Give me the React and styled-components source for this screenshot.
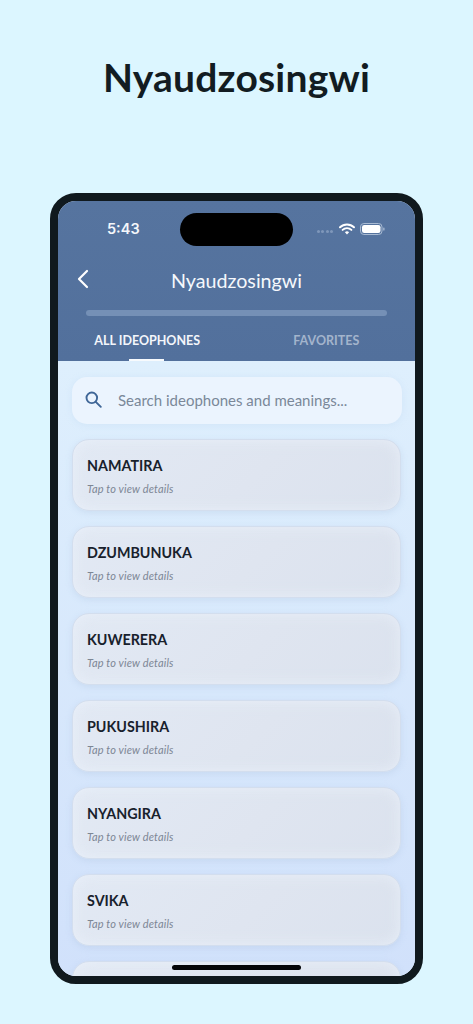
import React from 'react'
import styled, { createGlobalStyle } from 'styled-components'

const GlobalStyle = createGlobalStyle`
  html, body {
    margin: 0;
    padding: 0;
    background: #dcf6ff;
  }
  * { box-sizing: border-box; }
`

const Page = styled.div`
  width: 473px;
  height: 1024px;
  overflow: hidden;
  background: #dcf6ff;
  display: flex;
  flex-direction: column;
  align-items: center;
  padding-top: 53px;
`
const PageTitle = styled.h1`
  margin: 0 0 92px;
  height: 48px;
  line-height: 48px;
  font-family: "Lato", sans-serif;
  font-size: 39px;
  font-weight: 700;
  color: #121c22;
  letter-spacing: 0.2px;
`
const Phone = styled.div`
  width: 373px;
  height: 791px;
  flex: none;
  border: 8px solid #10191e;
  border-radius: 26px;
  background: #d6e6fb;
  overflow: hidden;
  position: relative;
  font-family: "Lato", sans-serif;
`
const Header = styled.header`
  height: 160px;
  background: linear-gradient(180deg, #56749f 0%, #52709c 100%);
  display: flex;
  flex-direction: column;
`
const StatusBar = styled.div`
  height: 44px;
  margin-top: 12px;
  padding: 0 30px 0 49px;
  display: flex;
  align-items: flex-start;
  justify-content: space-between;
`
const Time = styled.span`
  font-family: "Inter", sans-serif;
  font-size: 14.5px;
  font-weight: 600;
  line-height: 32px;
  color: #f4f7fb;
`
const Island = styled.div`
  width: 113px;
  height: 33px;
  border-radius: 17px;
  background: #000;
  margin-left: 16px;
`
const StatusIcons = styled.div`
  display: flex;
  align-items: center;
  height: 32px;
  gap: 5px;
`
const NavRow = styled.div`
  height: 44px;
  margin-top: 1px;
  padding: 0 19px;
  display: flex;
  align-items: center;
  position: relative;
  justify-content: center;
`
const BackButton = styled.button`
  position: absolute;
  left: 17px;
  top: 11px;
  padding: 0;
  border: 0;
  background: none;
  display: flex;
`
const NavTitle = styled.span`
  font-size: 19.7px;
  font-weight: 400;
  color: #f5f8fc;
`
const Progress = styled.div`
  height: 6px;
  margin: 8px 28px 0 28px;
  border-radius: 3px;
  background: #7590b6;
`
const Tabs = styled.nav`
  flex: 1;
  display: flex;
`
const Tab = styled.div`
  width: 50%;
  position: relative;
  display: flex;
  justify-content: center;
  padding-top: 16px;
  padding-left: ${(props) => (props.$active ? '0' : '1px')};
  font-size: 12.5px;
  font-weight: 700;
  line-height: 18px;
  color: ${(props) => (props.$active ? '#f3f6fb' : '#a3b4cc')};

  &::after {
    content: '';
    display: ${(props) => (props.$active ? 'block' : 'none')};
    position: absolute;
    left: 71px;
    bottom: 0;
    width: 35px;
    height: 2px;
    background: #f7fafd;
  }
`
const Content = styled.main`
  height: 615px;
  overflow: hidden;
  padding: 16px 14px 0 14px;
  background: linear-gradient(180deg, #deeffd 0%, #d1e1fb 100%);
  display: flex;
  flex-direction: column;
  gap: 15px;
`
const SearchBox = styled.div`
  width: 330px;
  height: 47px;
  flex: none;
  border-radius: 15px;
  background: #ebf4fe;
  display: flex;
  align-items: center;
  padding: 0 0 2px 13px;
  gap: 16px;
  box-shadow: 0 1px 6px rgba(190, 215, 240, 0.35);
`
const SearchText = styled.span`
  font-size: 15px;
  letter-spacing: 0;
  color: #7a8899;
`
const CardList = styled.div`
  display: flex;
  flex-direction: column;
  gap: 15px;
`
const Card = styled.article`
  width: 329px;
  height: 72px;
  flex: none;
  border-radius: 17px;
  border: 1px solid #d3deee;
  background: linear-gradient(135deg, #e2e9f4 0%, #dfe5f0 55%, #dbe2ee 100%);
  box-shadow: 0 2px 6px rgba(165, 185, 215, 0.28), inset 0 0 14px rgba(236, 243, 252, 0.7);
  padding: 16px 14px 0 14px;
`
const CardTitle = styled.h3`
  margin: 0;
  font-size: 14.3px;
  font-weight: 700;
  line-height: 20px;
  color: #18212c;
`
const CardHint = styled.p`
  margin: 6px 0 0;
  font-size: 11px;
  font-style: italic;
  line-height: 14px;
  letter-spacing: 0.15px;
  color: #7d8695;
`
const HomeBar = styled.div`
  position: absolute;
  left: 114px;
  bottom: 6px;
  width: 129px;
  height: 5px;
  border-radius: 3px;
  background: #050608;
`
const Signal = styled.div`
  display: flex;
  gap: 1.5px;
  margin-right: 1px;
  margin-top: 4px;
`
const SignalDot = styled.i`
  width: 3px;
  height: 3px;
  border-radius: 50%;
  background: #7f97ba;
`

const words = ['NAMATIRA', 'DZUMBUNUKA', 'KUWERERA', 'PUKUSHIRA', 'NYANGIRA', 'SVIKA']

function WifiIcon() {
  return (
    <svg width="16" height="12" viewBox="0 0 16 12" fill="none">
      <path d="M1 4.3a10 10 0 0 1 14 0" stroke="#fff" strokeWidth="1.9" strokeLinecap="round" />
      <path d="M3.6 6.9a6.3 6.3 0 0 1 8.8 0" stroke="#fff" strokeWidth="1.9" strokeLinecap="round" />
      <path d="M8 11.4 5.9 9.2a3 3 0 0 1 4.2 0z" fill="#fff" />
    </svg>
  )
}

function BatteryIcon() {
  return (
    <svg width="25" height="12" viewBox="0 0 25 12" fill="none">
      <rect x="0.5" y="0.5" width="21.5" height="11" rx="3.4" stroke="#a9bbd3" />
      <rect x="2" y="2" width="18.5" height="8" rx="2.2" fill="#fff" />
      <rect x="23.2" y="4.5" width="1.3" height="3" rx="0.6" fill="#a9bbd3" />
    </svg>
  )
}

function ChevronIcon() {
  return (
    <svg width="16" height="20" viewBox="0 0 16 20" fill="none">
      <path d="M12 2 4 10l8 8" stroke="#fff" strokeWidth="2.2" strokeLinecap="round" strokeLinejoin="round" />
    </svg>
  )
}

function SearchIcon() {
  return (
    <svg width="17" height="17" viewBox="0 0 17 17" fill="none">
      <circle cx="6.8" cy="6.8" r="5.3" stroke="#3f6697" strokeWidth="1.9" />
      <path d="m10.8 10.8 5 5" stroke="#3f6697" strokeWidth="1.9" strokeLinecap="round" />
    </svg>
  )
}

export default function App() {
  return (
    <Page>
      <GlobalStyle />
      <PageTitle>Nyaudzosingwi</PageTitle>
      <Phone>
        <Header>
          <StatusBar>
            <Time>5:43</Time>
            <Island />
            <StatusIcons>
              <Signal>
                <SignalDot />
                <SignalDot />
                <SignalDot />
                <SignalDot />
              </Signal>
              <WifiIcon />
              <BatteryIcon />
            </StatusIcons>
          </StatusBar>
          <NavRow>
            <BackButton>
              <ChevronIcon />
            </BackButton>
            <NavTitle>Nyaudzosingwi</NavTitle>
          </NavRow>
          <Progress />
          <Tabs>
            <Tab $active>ALL IDEOPHONES</Tab>
            <Tab>FAVORITES</Tab>
          </Tabs>
        </Header>
        <Content>
          <SearchBox>
            <SearchIcon />
            <SearchText>Search ideophones and meanings...</SearchText>
          </SearchBox>
          <CardList>
            {words.map((word) => (
              <Card key={word}>
                <CardTitle>{word}</CardTitle>
                <CardHint>Tap to view details</CardHint>
              </Card>
            ))}
            <Card />
          </CardList>
        </Content>
        <HomeBar />
      </Phone>
    </Page>
  )
}
